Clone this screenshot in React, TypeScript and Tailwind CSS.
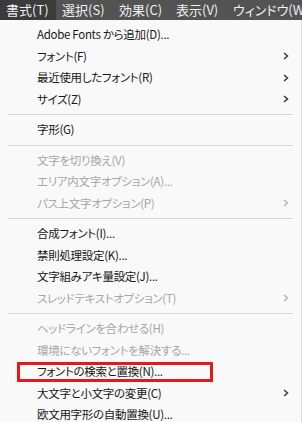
type Item = { label?: string; disabled?: boolean; sub?: boolean; sep?: boolean };

const items: Item[] = [
  { label: "Adobe Fonts から追加(D)..." },
  { label: "フォント(F)", sub: true },
  { label: "最近使用したフォント(R)", sub: true },
  { label: "サイズ(Z)", sub: true },
  { sep: true },
  { label: "字形(G)" },
  { sep: true },
  { label: "文字を切り換え(V)", disabled: true },
  { label: "エリア内文字オプション(A)...", disabled: true },
  { label: "パス上文字オプション(P)", disabled: true, sub: true },
  { sep: true },
  { label: "合成フォント(I)..." },
  { label: "禁則処理設定(K)..." },
  { label: "文字組みアキ量設定(J)..." },
  { label: "スレッドテキストオプション(T)", disabled: true, sub: true },
  { sep: true },
  { label: "ヘッドラインを合わせる(H)", disabled: true },
  { label: "環境にないフォントを解決する...", disabled: true },
  { label: "フォントの検索と置換(N)..." },
  { label: "大文字と小文字の変更(C)", sub: true },
  { label: "欧文用字形の自動置換(U)..." },
];

const menus = ["書式(T)", "選択(S)", "効果(C)", "表示(V)", "ウィンドウ(W)"];

function Chevron({ disabled }: { disabled?: boolean }) {
  return (
    <svg width="6" height="8" viewBox="0 0 6 8" className={disabled ? "text-[#b4b4b4]" : "text-[#3a3a3a]"}>
      <path d="M1 1 L4.5 4 L1 7" fill="none" stroke="currentColor" strokeWidth="1.5" />
    </svg>
  );
}

export default function App() {
  return (
    <div className="w-[302px] h-[422px] overflow-hidden bg-[#f9f9f9] [font-family:'Noto_Sans_CJK_JP',sans-serif] [font-feature-settings:'palt']">
      <div className="flex h-[20px] bg-[#535353] text-[13px] leading-[20px] text-[#eef0f2] whitespace-nowrap">
        {menus.map((m, i) => (
          <div key={m} className={i === 0 ? "pl-[6px] pr-[4px] w-[56px] bg-[#3b3b3b]" : "pl-[6px] pr-[3px] w-[57px]"}>
            {m}
          </div>
        ))}
      </div>
      <div className="relative pt-[4px] border-r border-[#dcdcdc] h-[402px]">
        {items.map((it, i) =>
          it.sep ? (
            <div key={i} className="h-[9px] flex items-center px-[8px]">
              <div className="h-px w-full bg-[#d6d6d6]" />
            </div>
          ) : (
            <div
              key={i}
              className={`h-[21.5px] flex items-center justify-between pl-[37px] pr-[12px] text-[11.5px] tracking-[-0.3px] ${
                it.disabled ? "text-[#a6a6a6]" : "text-[#161616]"
              }`}
            >
              <span>{it.label}</span>
              {it.sub && <Chevron disabled={it.disabled} />}
            </div>
          )
        )}
        <div className="absolute left-[17px] top-[342px] w-[196px] h-[20px] border-[3px] border-[#e3191c]" />
      </div>
    </div>
  );
}
